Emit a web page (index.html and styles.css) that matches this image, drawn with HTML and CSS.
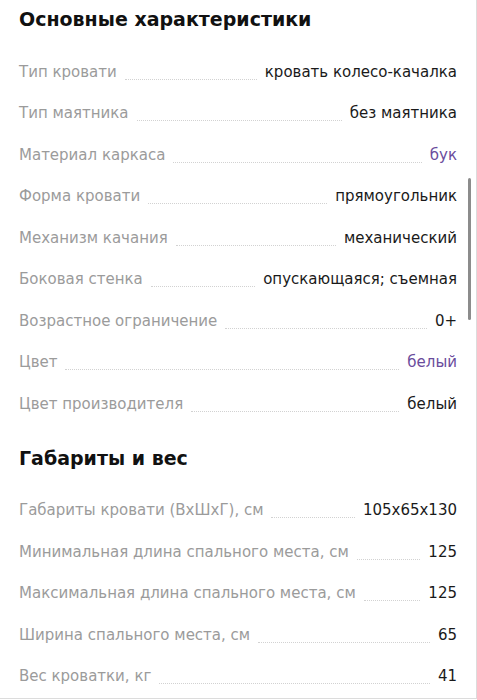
FILE: index.html
```html
<!DOCTYPE html>
<html lang="ru">
<head>
    <meta charset="UTF-8">
    <meta name="viewport" content="width=device-width, initial-scale=1.0">
    <title>Характеристики</title>
    <link rel="stylesheet" href="styles.css">
</head>
<body>

    <div class="panel">
        <div class="scrollbar"></div>

        <h2>Основные характеристики</h2>
        <div class="params">
            <div class="row"><span class="name">Тип кровати</span><span class="dots"></span><span class="value">кровать колесо-качалка</span></div>
            <div class="row"><span class="name">Тип маятника</span><span class="dots"></span><span class="value">без маятника</span></div>
            <div class="row"><span class="name">Материал каркаса</span><span class="dots"></span><span class="value link">бук</span></div>
            <div class="row"><span class="name">Форма кровати</span><span class="dots"></span><span class="value">прямоугольник</span></div>
            <div class="row"><span class="name">Механизм качания</span><span class="dots"></span><span class="value">механический</span></div>
            <div class="row"><span class="name">Боковая стенка</span><span class="dots"></span><span class="value">опускающаяся; съемная</span></div>
            <div class="row"><span class="name">Возрастное ограничение</span><span class="dots"></span><span class="value">0+</span></div>
            <div class="row"><span class="name">Цвет</span><span class="dots"></span><span class="value link">белый</span></div>
            <div class="row"><span class="name">Цвет производителя</span><span class="dots"></span><span class="value">белый</span></div>
        </div>

        <h2 class="second">Габариты и вес</h2>
        <div class="params">
            <div class="row"><span class="name">Габариты кровати (ВхШхГ), см</span><span class="dots"></span><span class="value">105x65x130</span></div>
            <div class="row"><span class="name">Минимальная длина спального места, см</span><span class="dots"></span><span class="value">125</span></div>
            <div class="row"><span class="name">Максимальная длина спального места, см</span><span class="dots"></span><span class="value">125</span></div>
            <div class="row"><span class="name">Ширина спального места, см</span><span class="dots"></span><span class="value">65</span></div>
            <div class="row"><span class="name">Вес кроватки, кг</span><span class="dots"></span><span class="value">41</span></div>
        </div>
    </div>

</body>
</html>
```

FILE: styles.css
```css
body {
    margin: 0;
    font-family: "DejaVu Sans", sans-serif;
    background-color: white;
    color: #1a1a1a;
}
.panel {
    position: relative;
    box-sizing: border-box;
    width: 477px;
    height: 699px;
    padding: 0 19px;
    border-right: 1px solid #dcdcdc;
    border-bottom: 1px solid #dcdcdc;
    overflow: hidden;
}
.scrollbar {
    position: absolute;
    top: 178px;
    right: 5px;
    width: 3px;
    height: 142px;
    border-radius: 2px;
    background-color: #8c8c8c;
}
h2 {
    margin: 0 0 13px;
    height: 38px;
    line-height: 38px;
    font-size: 19px;
    font-weight: bold;
    color: #111;
}
h2.second {
    margin-top: 14px;
}
.row {
    display: flex;
    align-items: center;
    height: 41.5px;
    font-size: 15px;
}
.name {
    color: #9b9b9b;
    white-space: nowrap;
}
.dots {
    flex: 1;
    align-self: stretch;
    margin: 0 8px 13px;
    border-bottom: 1px dotted #d2d2d2;
}
.value {
    white-space: nowrap;
    text-align: right;
}
.link {
    color: #6a4c9c;
}
```
